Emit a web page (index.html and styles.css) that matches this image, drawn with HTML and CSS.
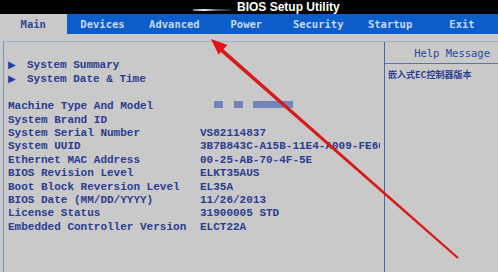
FILE: index.html
```html
<!DOCTYPE html>
<html lang="en">

<head>
    <meta charset="UTF-8">
    <meta name="viewport" content="width=device-width, initial-scale=1.0">
    <title>BIOS Setup Utility</title>
    <link rel="stylesheet" href="styles.css">
</head>

<body>
    <div class="titlebar">
        <span class="glare"></span>
        <span class="title">BIOS Setup Utility</span>
    </div>

    <div class="tabs">
        <div class="tab active">Main</div>
        <div class="tab">Devices</div>
        <div class="tab">Advanced</div>
        <div class="tab">Power</div>
        <div class="tab">Security</div>
        <div class="tab">Startup</div>
        <div class="tab">Exit</div>
    </div>

    <div class="panel">
        <div class="info">
            <div class="menu-item"><span class="arrow">&#9654;</span>System Summary</div>
            <div class="menu-item"><span class="arrow">&#9654;</span>System Date &amp; Time</div>
            <div class="spacer"></div>

            <div class="row">
                <span class="label">Machine Type And Model</span>
                <span class="value hidden-model">
                    <span class="blur-box small"></span>
                    <span class="blur-box small"></span>
                    <span class="blur-box wide"></span>
                </span>
            </div>
            <div class="row"><span class="label">System Brand ID</span><span class="value"></span></div>
            <div class="row"><span class="label">System Serial Number</span><span class="value">VS82114837</span></div>
            <div class="row"><span class="label">System UUID</span><span class="value">3B7B843C-A15B-11E4-A009-FE6C</span></div>
            <div class="row"><span class="label">Ethernet MAC Address</span><span class="value">00-25-AB-70-4F-5E</span></div>
            <div class="row"><span class="label">BIOS Revision Level</span><span class="value">ELKT35AUS</span></div>
            <div class="row"><span class="label">Boot Block Reversion Level</span><span class="value">EL35A</span></div>
            <div class="row"><span class="label">BIOS Date (MM/DD/YYYY)</span><span class="value">11/26/2013</span></div>
            <div class="row"><span class="label">License Status</span><span class="value">31900005 STD</span></div>
            <div class="row"><span class="label">Embedded Controller Version</span><span class="value">ELCT22A</span></div>
        </div>

        <div class="help">
            <div class="help-title">Help Message</div>
            <div class="help-text">嵌入式EC控制器版本</div>
        </div>
    </div>

    <!-- red annotation arrow -->
    <svg class="annotation" width="498" height="272" viewBox="0 0 498 272">
        <polygon points="219.2,45.6 458.7,257.3 457.3,258.7 216.8,48.4" fill="#d81a1a" />
        <polygon points="211,39 218.5,54.5 227.5,45" fill="#e21616" />
    </svg>
</body>

</html>
```

FILE: styles.css
```css
body {
    margin: 0;
    width: 498px;
    height: 272px;
    overflow: hidden;
    background-color: #c9c9c9;
    position: relative;
    font-family: 'Liberation Mono', monospace;
}

.titlebar {
    height: 14px;
    background-color: #000;
    display: flex;
    align-items: center;
    padding-left: 193px;
}

.glare {
    width: 38px;
    height: 2px;
    margin-top: 6px;
    margin-right: 6px;
    background: linear-gradient(to right, #777, #eee 30%, #666 60%, #222);
}

.title {
    color: #fff;
    font-family: 'Liberation Sans', sans-serif;
    font-weight: bold;
    font-size: 12px;
}

.tabs {
    height: 20px;
    background-color: #0c5cc9;
    display: flex;
}

.tab {
    width: 73.5px;
    text-align: center;
    line-height: 20px;
    font-family: 'DejaVu Sans Mono', monospace;
    font-size: 10.5px;
    font-weight: bold;
    color: #c7d8ef;
}

.tab.active {
    width: 68px;
    background-color: #c9c9c9;
    color: #2f4a98;
}

.panel {
    display: flex;
    margin: 7px 0 0 3px;
    height: 231px;
    border-top: 1px solid #9fb0cc;
    border-left: 1px solid #7e95c2;
}

.info {
    width: 376px;
    padding: 16px 0 0 4px;
    color: #2a3d90;
    font-size: 11px;
    font-weight: bold;
    line-height: 13.4px;
}

.menu-item {
    white-space: nowrap;
}

.arrow {
    display: inline-block;
    width: 19px;
    font-family: 'DejaVu Sans', sans-serif;
    font-size: 10px;
    color: #1c3fa8;
}

.spacer {
    height: 13.4px;
}

.row {
    display: flex;
    white-space: nowrap;
    height: 13.4px;
}

.label {
    width: 192px;
    flex-shrink: 0;
}

.value {
    width: 180px;
    overflow: hidden;
}

.hidden-model {
    display: flex;
    align-items: flex-start;
}

.blur-box {
    height: 7px;
    margin-top: 1px;
    background-color: #7185bb;
}

.blur-box.small {
    width: 9px;
    margin-left: 14px;
}

.blur-box.small + .blur-box.small {
    margin-left: 11px;
}

.blur-box.wide {
    width: 40px;
    margin-left: 10px;
}

.help {
    flex: 1;
    border-left: 1px solid #3f6cac;
}

.help-title {
    height: 21px;
    line-height: 22px;
    text-align: right;
    padding-right: 8px;
    border-bottom: 1px solid #4f78b4;
    font-family: 'DejaVu Sans Mono', monospace;
    font-size: 10.5px;
    color: #2c4a96;
}

.help-text {
    padding: 4px 0 0 3px;
    font-family: 'Noto Sans CJK SC', sans-serif;
    font-size: 9px;
    font-weight: bold;
    color: #2c3f92;
}

.annotation {
    position: absolute;
    top: 0;
    left: 0;
}
```
